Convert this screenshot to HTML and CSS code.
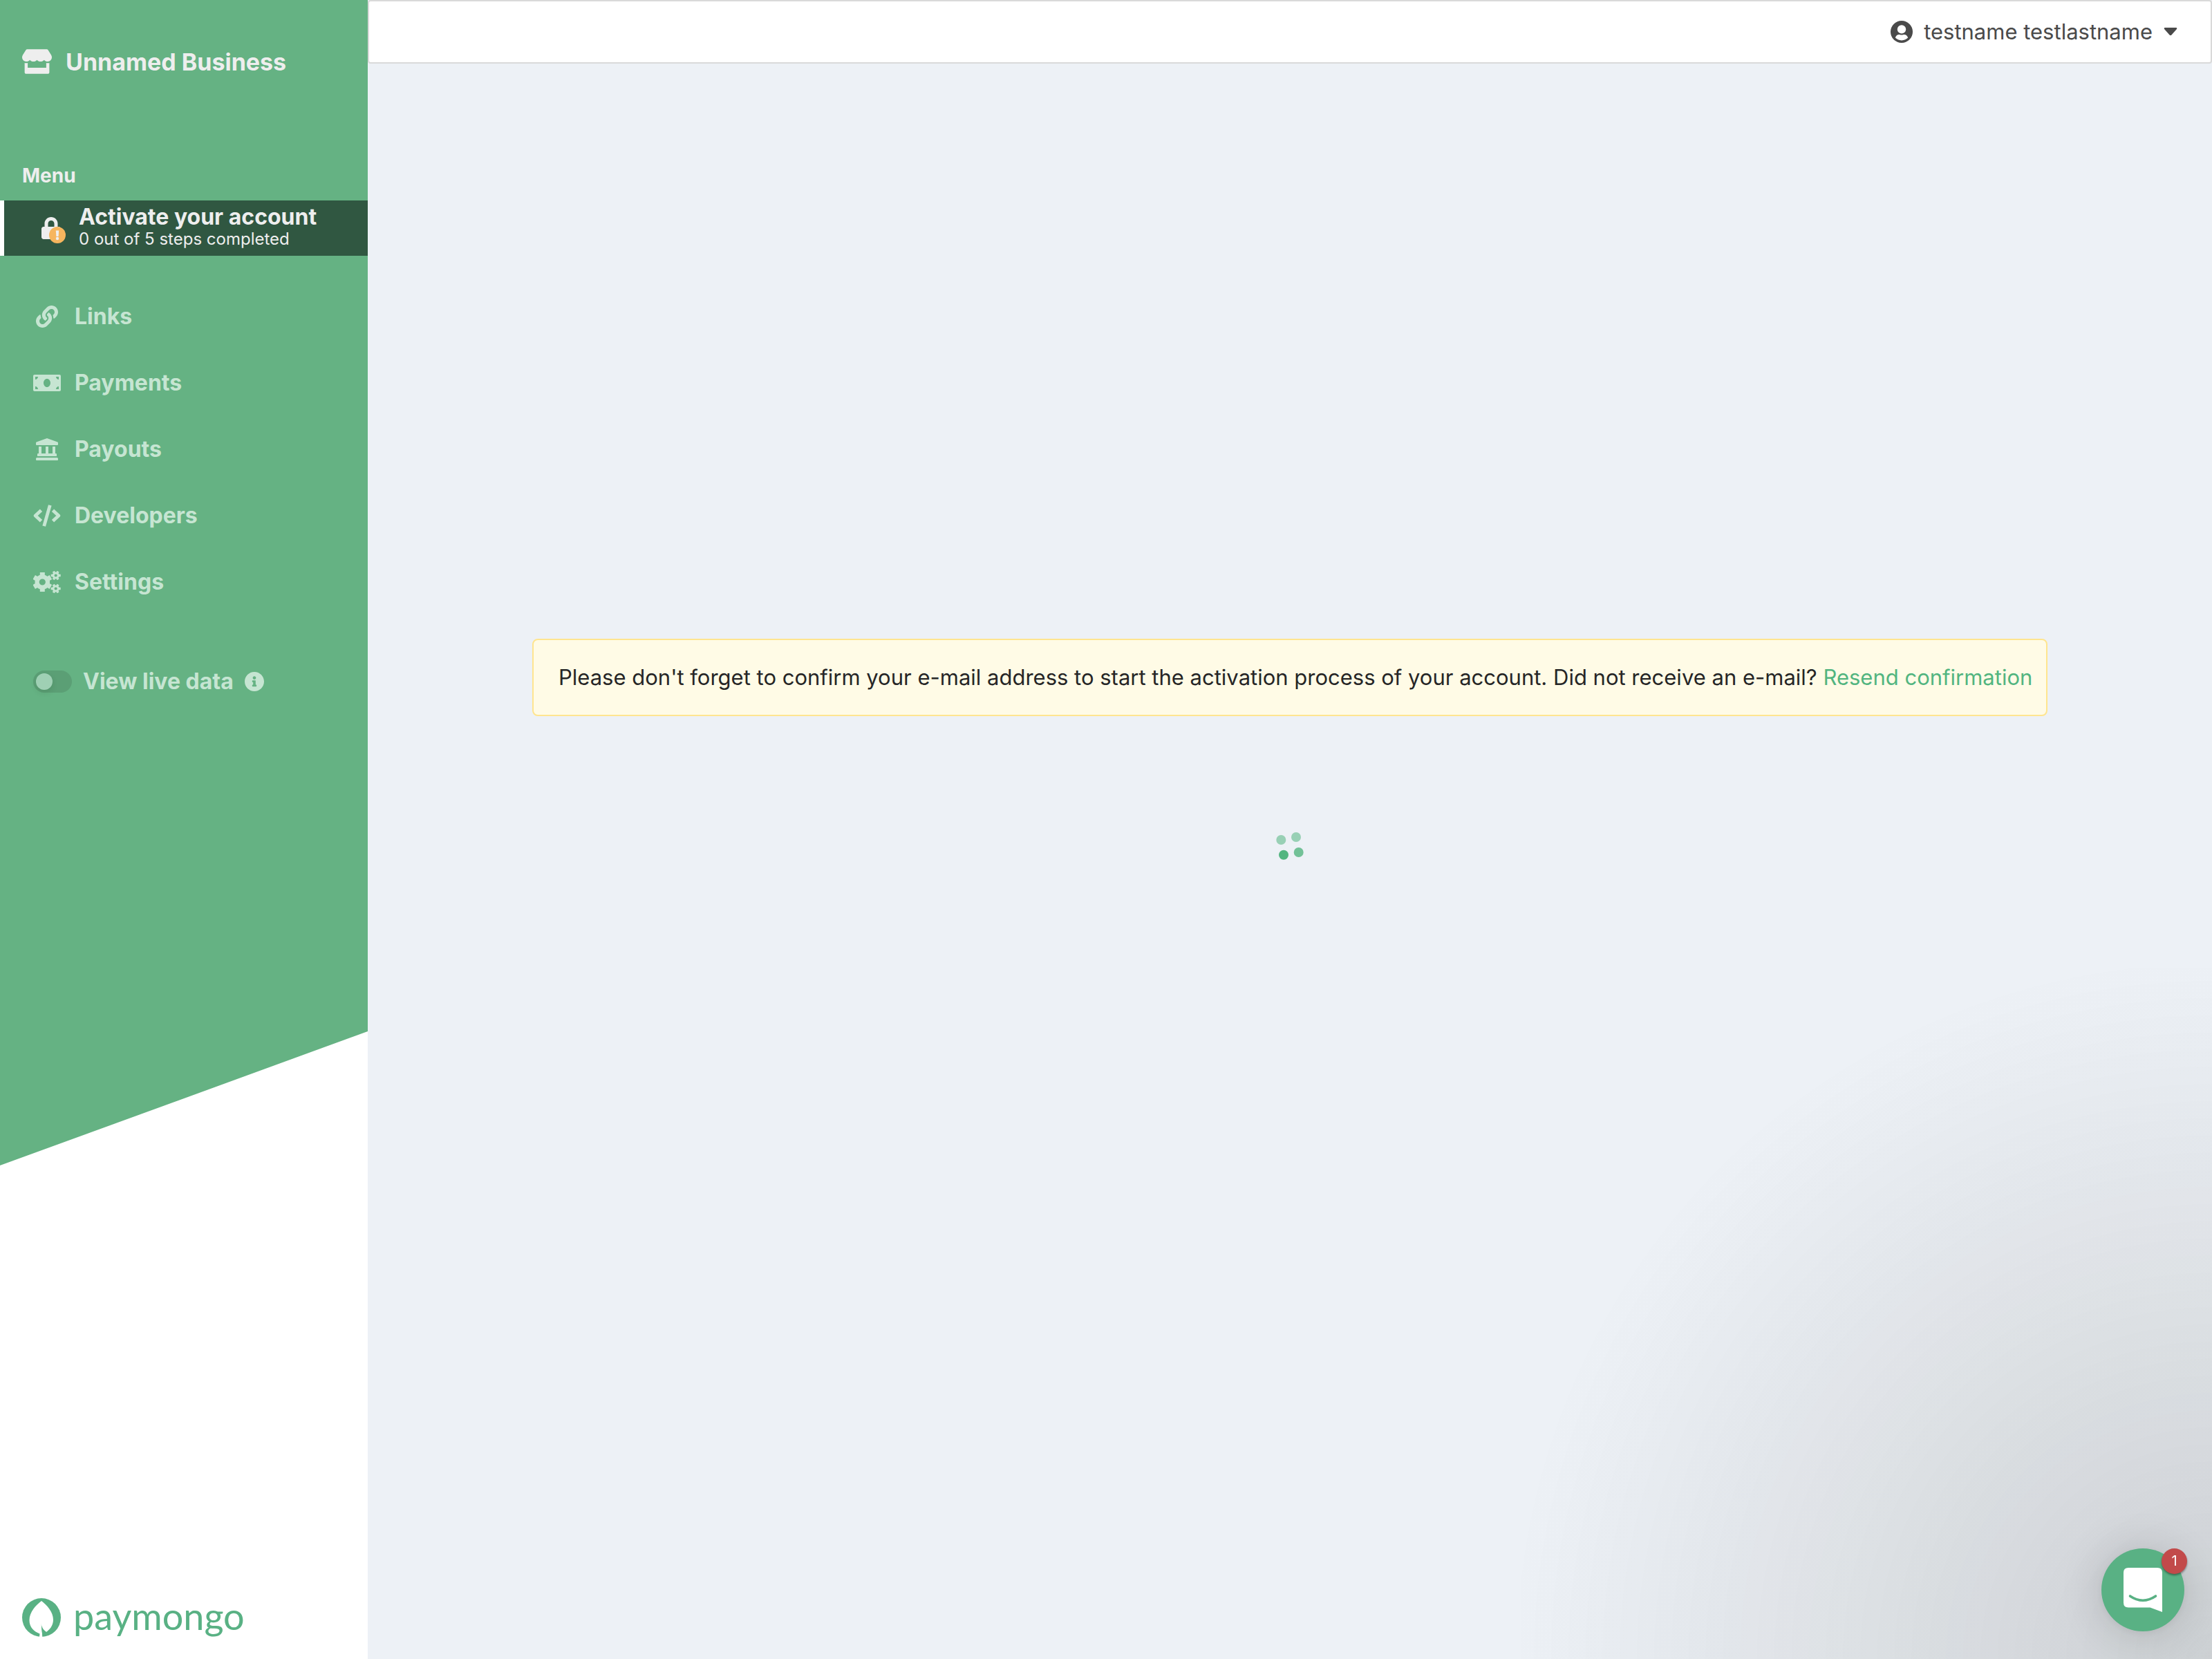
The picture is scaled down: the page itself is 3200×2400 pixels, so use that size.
FILE: index.html
```html
<!DOCTYPE html>
<html lang="en">
<head>
<meta charset="utf-8">
<meta name="viewport" content="width=device-width, initial-scale=1">
<title>Dashboard</title>
<link rel="stylesheet" href="styles.css">
</head>
<body>
<aside class="sidebar">
  <div class="panel">
    <div class="brand">
      <svg class="brand-icon" viewBox="0 0 616 512" aria-hidden="true"><path d="M602 118.6L537.1 15C531.3 5.7 521 0 510 0H106C95 0 84.7 5.7 78.9 15L14 118.6c-33.5 53.5-3.8 127.9 58.8 136.4 4.5.6 9.1.9 13.7.9 29.6 0 55.8-13 73.8-33.1 18 20.1 44.3 33.1 73.8 33.1 29.6 0 55.8-13 73.8-33.1 18 20.1 44.3 33.1 73.8 33.1 29.6 0 55.8-13 73.8-33.1 18.1 20.1 44.3 33.1 73.8 33.1 4.7 0 9.2-.3 13.7-.9 62.8-8.4 92.6-82.8 59-136.4zM529.5 288c-10 0-19.9-1.5-29.5-3.8V384H116v-99.8c-9.6 2.2-19.5 3.8-29.5 3.8-6 0-12.1-.4-18-1.2-5.6-.8-11.1-2.1-16.4-3.6V480c0 17.7 14.3 32 32 32h448c17.7 0 32-14.3 32-32V283.2c-5.4 1.6-10.8 2.9-16.4 3.6-6.1.8-12.1 1.2-18.2 1.2z"/></svg>
      <span class="brand-name">Unnamed Business</span>
    </div>
    <h2 class="menu-title">Menu</h2>
    <a class="activate" href="#activate">
      <svg class="activate-icon" viewBox="0 0 36 44" aria-hidden="true">
        <path transform="translate(0 6) scale(.0625)" fill="currentColor" d="M400 224h-24v-72C376 68.200 307.800 0 224 0S72 68.200 72 152v72H48c-26.500 0-48 21.500-48 48v192c0 26.500 21.500 48 48 48h352c26.500 0 48-21.500 48-48V272c0-26.500-21.500-48-48-48zm-104 0H152v-72c0-39.700 32.300-72 72-72s72 32.300 72 72v72z"/>
        <circle cx="23" cy="32" r="12" fill="#f6b55e"/>
        <path fill="currentColor" d="M20.800 25.500h4.400l-.6 8.500h-3.200z"/><circle cx="23" cy="37" r="2.200" fill="currentColor"/>
      </svg>
      <span class="activate-text">
        <strong class="activate-title">Activate your account</strong>
        <span class="activate-steps">0 out of 5 steps completed</span>
      </span>
    </a>
    <nav class="nav">
      <a class="nav-item" href="#links">
        <svg class="nav-icon" viewBox="0 0 512 512" aria-hidden="true"><path d="M326.612 185.391c59.747 59.809 58.927 155.698.36 214.590-.11.12-.24.25-.36.37l-67.200 67.200c-59.270 59.270-155.699 59.262-214.960 0-59.270-59.260-59.270-155.700 0-214.960l37.106-37.106c9.840-9.840 26.786-3.300 27.294 10.606.648 17.722 3.826 35.527 9.690 52.721 1.986 5.822.567 12.262-3.783 16.612l-13.087 13.087c-28.026 28.026-28.905 73.660-1.155 101.960 28.024 28.579 74.086 28.749 102.325.51l67.200-67.190c28.191-28.191 28.073-73.757 0-101.830-3.701-3.694-7.429-6.564-10.341-8.569a16.037 16.037 0 0 1-6.947-12.606c-.396-10.567 3.348-21.456 11.698-29.806l21.054-21.055c5.521-5.521 14.182-6.199 20.584-1.731a152.482 152.482 0 0 1 20.522 17.197zM467.547 44.449c-59.261-59.262-155.690-59.270-214.960 0l-67.200 67.200c-.12.12-.25.25-.36.37-58.566 58.892-59.387 154.781.36 214.590a152.454 152.454 0 0 0 20.521 17.196c6.402 4.468 15.064 3.789 20.584-1.731l21.054-21.055c8.350-8.350 12.094-19.239 11.698-29.806a16.037 16.037 0 0 0-6.947-12.606c-2.912-2.005-6.640-4.875-10.341-8.569-28.073-28.073-28.191-73.639 0-101.830l67.200-67.190c28.239-28.239 74.300-28.069 102.325.51 27.750 28.300 26.872 73.934-1.155 101.960l-13.087 13.087c-4.350 4.350-5.769 10.790-3.783 16.612 5.864 17.194 9.042 34.999 9.690 52.721.509 13.906 17.454 20.446 27.294 10.606l37.106-37.106c59.271-59.259 59.271-155.699.001-214.959z"/></svg>
        <span>Links</span>
      </a>
      <a class="nav-item" href="#payments">
        <svg class="nav-icon" viewBox="0 0 640 512" aria-hidden="true"><path d="M608 64H32C14.330 64 0 78.330 0 96v320c0 17.670 14.330 32 32 32h576c17.670 0 32-14.330 32-32V96c0-17.670-14.330-32-32-32zM48 400v-64c35.350 0 64 28.650 64 64H48zm0-224v-64h64c0 35.350-28.650 64-64 64zm272 176c-44.190 0-80-42.990-80-96 0-53.020 35.820-96 80-96s80 42.980 80 96c0 53.030-35.830 96-80 96zm272 48h-64c0-35.350 28.650-64 64-64v64zm0-224c-35.350 0-64-28.650-64-64h64v64z"/></svg>
        <span>Payments</span>
      </a>
      <a class="nav-item" href="#payouts">
        <svg class="nav-icon" viewBox="0 0 32 32" aria-hidden="true"><path d="M16 0L31.300 5.600Q32 6 32 6.700V9Q32 10 31 10H1Q0 10 0 9V6.700Q0 6 .7 5.600ZM4 12H8V22H14V12H18V22H24V12H28V22H29Q30 22 30 23V26H2V23Q2 22 3 22H4ZM1.500 28H30.500Q32 28 32 29.500V31Q32 32 31 32H1Q0 32 0 31V29.500Q0 28 1.500 28Z"/></svg>
        <span>Payouts</span>
      </a>
      <a class="nav-item" href="#developers">
        <svg class="nav-icon" viewBox="0 0 40 32" aria-hidden="true"><path fill="none" stroke="currentColor" stroke-width="4.800" stroke-linejoin="round" d="M11.500 8.200L3.200 16L11.500 23.800M28.500 8.200L36.800 16L28.500 23.800M24.300.8L15.700 31.200"/></svg>
        <span>Developers</span>
      </a>
      <a class="nav-item" href="#settings">
        <svg class="nav-icon" viewBox="0 0 40 32" aria-hidden="true" fill="none" stroke="currentColor">
          <g transform="translate(13.300 16)">
            <circle r="7.700" stroke-width="6.200"/>
            <path stroke-width="7" d="M0-9V-14M0 9V14M7.800-4.500L12.100-7M-7.800 4.500L-12.100 7M7.800 4.500L12.100 7M-7.800-4.500L-12.100-7"/>
          </g>
          <g id="cog-small" transform="translate(32.700 6.500)">
            <circle r="3.600" stroke-width="3"/>
            <path stroke-width="3.400" d="M4 0H7M-4 0H-7M2.200-3.800L3.400-5.900M-2.200-3.800L-3.400-5.900M2.200 3.800L3.400 5.900M-2.200 3.800L-3.400 5.900"/>
          </g>
          <use href="#cog-small" y="19"/>
        </svg>
        <span>Settings</span>
      </a>
    </nav>
    <div class="live">
      <input class="switch" type="checkbox" role="switch" id="live-data">
      <label for="live-data">View live data</label>
      <svg class="live-info" viewBox="8 8 496 496" aria-hidden="true"><path d="M256 8C119.043 8 8 119.083 8 256c0 136.997 111.043 248 248 248s248-111.003 248-248C504 119.083 392.957 8 256 8zm0 110c23.196 0 42 18.804 42 42s-18.804 42-42 42-42-18.804-42-42 18.804-42 42-42zm56 254c0 6.627-5.373 12-12 12h-88c-6.627 0-12-5.373-12-12v-24c0-6.627 5.373-12 12-12h12v-64h-12c-6.627 0-12-5.373-12-12v-24c0-6.627 5.373-12 12-12h64c6.627 0 12 5.373 12 12v100h12c6.627 0 12 5.373 12 12v24z"/></svg>
    </div>
  </div>
  <a class="logo" href="#home">
    <svg class="logo-mark" viewBox="0 0 56 56" aria-hidden="true"><circle cx="28" cy="28" r="28" fill="#59b184"/><path fill="#fff" d="M28 4C20 10 10.500 20 10.500 32C10.500 42 17 48 25.500 51.500L25 56H29.500L27.500 36C27.500 42 30 46 35 49C40 45 45 40 45 31C45 20 36 10 28 4Z"/><path fill="#59b184" d="M27.500 36L29.500 56L31 52.500L35 49C31 46 28 42 27.500 36Z"/></svg>
    <span class="logo-text">paymongo</span>
  </a>
</aside>

<div class="page">
  <header class="topbar">
    <button class="account" type="button">
      <svg class="account-icon" viewBox="0 0 32 32" aria-hidden="true"><circle cx="16" cy="16" r="16" fill="currentColor"/><circle cx="16" cy="12.400" r="6.200" fill="#fff"/><path fill="#fff" d="M6.800 24.600C8 21.300 10 20 12.200 20C13.500 20 14 20.600 16 20.600S18.500 20 19.800 20C22 20 24 21.300 25.200 24.600C23 27 19.800 28.400 16 28.400S9 27 6.800 24.600Z"/></svg>
      <span>testname testlastname</span>
      <svg class="account-caret" viewBox="0 0 20 12" aria-hidden="true"><path fill="currentColor" d="M1.500 0H18.500Q20 .8 19 2L11.500 10.500Q10 12 8.500 10.500L1 2Q0 .8 1.500 0Z"/></svg>
    </button>
  </header>
  <main class="content">
    <p class="alert">Please don't forget to confirm your e-mail address to start the activation process of your account. Did not receive an e-mail? <a class="alert-link" href="#resend">Resend confirmation</a></p>
    <svg class="spinner" viewBox="0 0 46 46" role="img" aria-label="Loading" fill="#52b580"><circle cx="10.300" cy="15" r="7" opacity=".55"/><circle cx="32" cy="11" r="7" opacity=".55"/><circle cx="35.700" cy="33" r="7" opacity=".8"/><circle cx="14" cy="36.700" r="7"/></svg>
  </main>
</div>

<div class="chat-haze"></div>
<button class="chat" type="button" aria-label="Open chat">
  <svg class="chat-icon" viewBox="0 0 56 64" aria-hidden="true"><path fill="#fff" d="M7 0H49Q56 0 56 7V64L38.500 57.500H7Q0 57.500 0 50.500V7Q0 0 7 0Z"/><path fill="none" stroke="#59b184" stroke-width="3.600" stroke-linecap="round" d="M9.500 41Q28 53.500 46.500 41"/></svg>
  <span class="chat-badge">1</span>
</button>
</body>
</html>
```

FILE: styles.css
```css
* {
  box-sizing: border-box;
}

body {
  display: flex;
  min-height: 100vh;
  margin: 0;
  background: #edf1f6;
  color: #262626;
  font-family: Inter, "Liberation Sans", sans-serif;
  font-size: 31px;
  line-height: 48px;
}

a {
  color: inherit;
  text-decoration: none;
}

button {
  border: 0;
  padding: 0;
  background: none;
  color: inherit;
  font: inherit;
  cursor: pointer;
}

/* Sidebar */
.sidebar {
  display: flex;
  flex: 0 0 532px;
  flex-direction: column;
  justify-content: space-between;
  background: #fff;
}

.panel {
  min-height: 70.25vh;
  padding: 64px 0 240px;
  background: #65b283;
  color: #c6e5d2;
  font-size: 32px;
  font-weight: 700;
  clip-path: polygon(0 0, 100% 0, 100% calc(100% - 194px), 0 100%);
}

.brand {
  display: flex;
  align-items: center;
  gap: 20px;
  padding: 0 32px;
  color: #eee;
}

.brand-icon {
  width: 43px;
  height: 36px;
  fill: currentColor;
}

.brand-name {
  padding-top: 2px;
  font-size: 34px;
}

.menu-title {
  margin: 120px 0 16px;
  padding: 0 32px;
  color: #eee;
  font-size: 28px;
  font-weight: 700;
  line-height: 40px;
}

.activate {
  display: flex;
  align-items: center;
  height: 80px;
  padding-left: 54px;
  border-left: 6px solid #fff;
  background: #305741;
  color: #eee;
}

.activate-icon {
  width: 36px;
  height: 44px;
  margin-right: 18px;
}

.activate-text {
  display: flex;
  flex-direction: column;
}

.activate-title {
  font-size: 32px;
  font-weight: 700;
  line-height: 32px;
}

.activate-steps {
  font-size: 24px;
  font-weight: 400;
  line-height: 32px;
}

.nav {
  display: flex;
  flex-direction: column;
  margin: 40px 0 48px;
}

.nav-item {
  display: flex;
  align-items: center;
  gap: 20px;
  height: 96px;
  padding-left: 48px;
}

.nav-icon {
  width: 40px;
  height: 32px;
  fill: currentColor;
}

.nav-icon[fill="none"] {
  fill: none;
}

.live {
  display: flex;
  align-items: center;
  height: 96px;
  padding-left: 48px;
}

.switch {
  appearance: none;
  width: 56px;
  height: 32px;
  margin: 0 16px 0 0;
  padding: 4px;
  border-radius: 16px;
  background: #5b9f75;
}

.switch::before {
  content: "";
  display: block;
  width: 24px;
  height: 24px;
  border-radius: 50%;
  background: #9fd0b4;
  box-shadow: 0 4px 8px rgba(0, 35, 11, 0.1);
}

.live-info {
  width: 28px;
  height: 28px;
  margin-left: 16px;
  fill: currentColor;
}

.logo {
  display: flex;
  align-items: center;
  gap: 18px;
  padding: 32px;
  color: #59b184;
}

.logo-mark {
  width: 56px;
  height: 56px;
}

.logo-text {
  font-family: Lato, sans-serif;
  font-size: 54px;
  line-height: 52px;
  padding-bottom: 4px;
}

/* Main column */
.page {
  display: flex;
  flex: 1;
  flex-direction: column;
  min-width: 0;
}

.topbar {
  display: flex;
  align-items: center;
  justify-content: flex-end;
  height: 92px;
  padding-right: 48px;
  border: 2px solid #d9d9d9;
  border-radius: 4px;
  background: #fff;
  color: #4a4a4a;
}

.account {
  display: flex;
  align-items: center;
  gap: 16px;
}

.account-icon {
  width: 32px;
  height: 32px;
}

.account-caret {
  width: 20px;
  height: 12px;
}

.content {
  display: flex;
  flex-direction: column;
  align-items: center;
  gap: 164px;
  padding: 832px 48px 48px;
}

.alert {
  width: 100%;
  max-width: 2192px;
  margin: 0;
  padding: 30px 12px 30px 36px;
  border: 2px solid #ffe58f;
  border-radius: 8px;
  background: #fffbe6;
}

.alert-link {
  color: #52b580;
}

.spinner {
  width: 46px;
  height: 46px;
}

/* Chat launcher */
.chat-haze {
  position: fixed;
  right: 0;
  bottom: 0;
  width: 1000px;
  height: 1000px;
  background: radial-gradient(ellipse at bottom right, rgba(36, 36, 30, 0.16) 0, rgba(36, 36, 30, 0) 72%);
  pointer-events: none;
}

.chat {
  position: fixed;
  right: 40px;
  bottom: 40px;
  display: flex;
  align-items: center;
  justify-content: center;
  width: 120px;
  height: 120px;
  border-radius: 50%;
  background: #59b184;
  box-shadow: 0 2px 12px rgba(0, 0, 0, 0.06), 0 4px 64px rgba(0, 0, 0, 0.16);
}

.chat-icon {
  width: 56px;
  height: 64px;
}

.chat-badge {
  position: absolute;
  top: 0;
  right: -4px;
  width: 37px;
  height: 37px;
  border-radius: 50%;
  background: #c24a4a;
  box-shadow: 0 2px 3px rgba(0, 0, 0, 0.4);
  color: #fff;
  font-size: 20px;
  line-height: 37px;
}
```
